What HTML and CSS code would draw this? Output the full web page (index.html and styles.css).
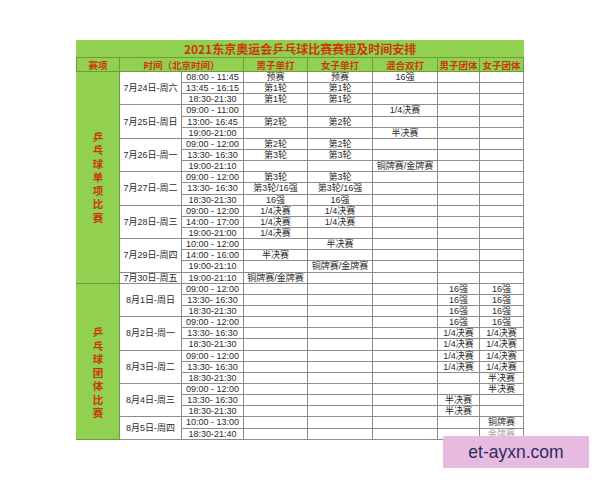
FILE: index.html
```html
<!DOCTYPE html>
<html lang="zh">
<head>
<meta charset="utf-8">
<title>2021东京奥运会乒乓球比赛赛程及时间安排</title>
<link rel="stylesheet" href="styles.css">
</head>
<body>
<div class="page">
<table class="sched">
<colgroup>
<col class="c1"><col class="c2"><col class="c3"><col class="c4"><col class="c5"><col class="c6"><col class="c7"><col class="c8">
</colgroup>
<tr class="title"><td colspan="8">2021东京奥运会乒乓球比赛赛程及时间安排</td></tr>
<tr class="head"><td>赛项</td><td colspan="2">时间（北京时间）</td><td>男子单打</td><td>女子单打</td><td>混合双打</td><td>男子团体</td><td>女子团体</td></tr>

<tr class="d"><td class="cat" rowspan="19"><div class="vt"><span>乒</span><span>乓</span><span>球</span><span>单</span><span>项</span><span>比</span><span>赛</span></div></td><td class="date" rowspan="3">7月24日-周六</td><td>08:00 - 11:45</td><td>预赛</td><td>预赛</td><td>16强</td><td></td><td></td></tr>
<tr class="d"><td>13:45 - 16:15</td><td>第1轮</td><td>第1轮</td><td></td><td></td><td></td></tr>
<tr class="d"><td>18:30-21:30</td><td>第1轮</td><td>第1轮</td><td></td><td></td><td></td></tr>

<tr class="d"><td class="date" rowspan="3">7月25日-周日</td><td>09:00 - 11:00</td><td></td><td></td><td>1/4决赛</td><td></td><td></td></tr>
<tr class="d"><td>13:00- 16:45</td><td>第2轮</td><td>第2轮</td><td></td><td></td><td></td></tr>
<tr class="d"><td>19:00-21:00</td><td></td><td></td><td>半决赛</td><td></td><td></td></tr>

<tr class="d"><td class="date" rowspan="3">7月26日-周一</td><td>09:00 - 12:00</td><td>第2轮</td><td>第2轮</td><td></td><td></td><td></td></tr>
<tr class="d"><td>13:30- 16:30</td><td>第3轮</td><td>第3轮</td><td></td><td></td><td></td></tr>
<tr class="d"><td>19:00-21:10</td><td></td><td></td><td>铜牌赛/金牌赛</td><td></td><td></td></tr>

<tr class="d"><td class="date" rowspan="3">7月27日-周二</td><td>09:00 - 12:00</td><td>第3轮</td><td>第3轮</td><td></td><td></td><td></td></tr>
<tr class="d"><td>13:30- 16:30</td><td>第3轮/16强</td><td>第3轮/16强</td><td></td><td></td><td></td></tr>
<tr class="d"><td>18:30-21:30</td><td>16强</td><td>16强</td><td></td><td></td><td></td></tr>

<tr class="d"><td class="date" rowspan="3">7月28日-周三</td><td>09:00 - 12:00</td><td>1/4决赛</td><td>1/4决赛</td><td></td><td></td><td></td></tr>
<tr class="d"><td>14:00 - 17:00</td><td>1/4决赛</td><td>1/4决赛</td><td></td><td></td><td></td></tr>
<tr class="d"><td>19:00-21:00</td><td>1/4决赛</td><td></td><td></td><td></td><td></td></tr>

<tr class="d"><td class="date" rowspan="3">7月29日-周四</td><td>10:00 - 12:00</td><td></td><td>半决赛</td><td></td><td></td><td></td></tr>
<tr class="d"><td>14:00 - 16:00</td><td>半决赛</td><td></td><td></td><td></td><td></td></tr>
<tr class="d"><td>19:00-21:10</td><td></td><td>铜牌赛/金牌赛</td><td></td><td></td><td></td></tr>

<tr class="d"><td class="date">7月30日-周五</td><td>19:00-21:10</td><td>铜牌赛/金牌赛</td><td></td><td></td><td></td><td></td></tr>

<tr class="d"><td class="cat team" rowspan="14"><div class="vt"><span>乒</span><span>乓</span><span>球</span><span>团</span><span>体</span><span>比</span><span>赛</span></div></td><td class="date" rowspan="3">8月1日-周日</td><td>09:00 - 12:00</td><td></td><td></td><td></td><td>16强</td><td>16强</td></tr>
<tr class="d"><td>13:30- 16:30</td><td></td><td></td><td></td><td>16强</td><td>16强</td></tr>
<tr class="d"><td>18:30-21:30</td><td></td><td></td><td></td><td>16强</td><td>16强</td></tr>

<tr class="d"><td class="date" rowspan="3">8月2日-周一</td><td>09:00 - 12:00</td><td></td><td></td><td></td><td>16强</td><td>16强</td></tr>
<tr class="d"><td>13:30- 16:30</td><td></td><td></td><td></td><td>1/4决赛</td><td>1/4决赛</td></tr>
<tr class="d"><td>18:30-21:30</td><td></td><td></td><td></td><td>1/4决赛</td><td>1/4决赛</td></tr>

<tr class="d"><td class="date" rowspan="3">8月3日-周二</td><td>09:00 - 12:00</td><td></td><td></td><td></td><td>1/4决赛</td><td>1/4决赛</td></tr>
<tr class="d"><td>13:30- 16:30</td><td></td><td></td><td></td><td>1/4决赛</td><td>1/4决赛</td></tr>
<tr class="d"><td>18:30-21:30</td><td></td><td></td><td></td><td></td><td>半决赛</td></tr>

<tr class="d"><td class="date" rowspan="3">8月4日-周三</td><td>09:00 - 12:00</td><td></td><td></td><td></td><td></td><td>半决赛</td></tr>
<tr class="d"><td>13:30- 16:30</td><td></td><td></td><td></td><td>半决赛</td><td></td></tr>
<tr class="d"><td>18:30-21:30</td><td></td><td></td><td></td><td>半决赛</td><td></td></tr>

<tr class="d"><td class="date" rowspan="2">8月5日-周四</td><td>10:00 - 13:00</td><td></td><td></td><td></td><td></td><td>铜牌赛</td></tr>
<tr class="d"><td>18:30-21:40</td><td></td><td></td><td></td><td></td><td class="faded">金牌赛</td></tr>
</table>
<div class="mark">et-ayxn.com</div>
</div>
</body>
</html>
```

FILE: styles.css
```css
html, body {
  margin: 0;
  padding: 0;
  background: #ffffff;
}
.page {
  position: relative;
  width: 600px;
  height: 480px;
  padding: 40px 0 0 76px;
  box-sizing: border-box;
}
.sched {
  border-collapse: collapse;
  table-layout: fixed;
  width: 447px;
  font-family: "Liberation Sans", "Noto Sans CJK SC", sans-serif;
  font-size: 9px;
  color: #2a2a2a;
}
.c1 { width: 43px; }
.c2 { width: 62px; }
.c3 { width: 62px; }
.c4 { width: 64px; }
.c5 { width: 65px; }
.c6 { width: 65px; }
.c7 { width: 42px; }
.c8 { width: 44px; }
.sched td {
  border: 1px solid #8c8c8c;
  padding: 0;
  text-align: center;
  vertical-align: middle;
  line-height: 10px;
  white-space: nowrap;
  overflow: hidden;
}
.title td {
  height: 16px;
  background: #92d050;
  border: 1px solid #92d050;
  border-bottom-color: #6e9a45;
  color: #c9380c;
  font-weight: bold;
  font-size: 12px;
  line-height: 14px;
  font-family: "Noto Sans CJK SC", sans-serif;
}
.head td {
  height: 13px;
  background: #92d050;
  border-color: #6e9a45;
  color: #c9380c;
  font-weight: bold;
  font-size: 9.5px;
  font-family: "Noto Sans CJK SC", sans-serif;
}
.d {
  height: 11.15px;
}
.d td {
  height: 10px;
}
.cat {
  background: #92d050;
  border-color: #6e9a45 !important;
  border-left-color: #92d050 !important;
}
.vt {
  display: flex;
  flex-direction: column;
  align-items: center;
  gap: 3px;
  color: #c9380c;
  font-weight: bold;
  font-size: 10.5px;
  line-height: 10.5px;
  font-family: "Noto Sans CJK SC", sans-serif;
}
.team .vt {
  margin-top: 24px;
}
.faded {
  color: #a8a8a8;
}
.mark {
  position: absolute;
  left: 443px;
  top: 436px;
  width: 146px;
  height: 32px;
  background: #e7bbdf;
  color: #2b2b5e;
  font-family: "Liberation Sans", sans-serif;
  font-size: 17.5px;
  line-height: 32px;
  text-align: center;
}
```
